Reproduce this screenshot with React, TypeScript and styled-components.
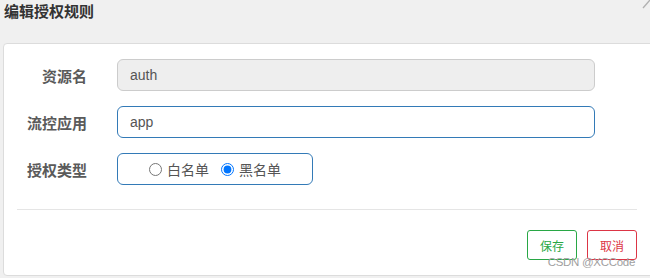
import styled, { createGlobalStyle } from "styled-components";

const GlobalStyle = createGlobalStyle`
  html, body {
    margin: 0;
    padding: 0;
    background: #f0f0f0;
    font-family: "Liberation Sans", "Noto Sans CJK SC", sans-serif;
  }
  * {
    box-sizing: border-box;
  }
`;

const Dialog = styled.div`
  position: relative;
  width: 650px;
  height: 278px;
  overflow: hidden;
  background: #f0f0f0;
`;

const Header = styled.div`
  height: 43px;
  padding: 3px 4px 0;
`;

const Title = styled.h4`
  margin: 0;
  font-size: 15px;
  line-height: 18px;
  font-weight: bold;
  color: #333;
`;

const CloseMark = styled.svg`
  position: absolute;
  top: 0;
  right: 0;
`;

const Panel = styled.div`
  margin-left: 3px;
  width: 652px;
  height: 233px;
  background: #fff;
  border: 1px solid #dcdcdc;
  border-radius: 4px;
  padding: 15px 17px 0 0;
`;

const Form = styled.div`
  display: flex;
  flex-direction: column;
  gap: 15px;
`;

const Row = styled.div`
  display: grid;
  grid-template-columns: 83px auto;
  column-gap: 30px;
  align-items: center;
`;

const Label = styled.label`
  text-align: right;
  font-size: 15px;
  font-weight: bold;
  color: #5a5a5a;
`;

const TextInput = styled.div<{ $disabled?: boolean }>`
  width: 478px;
  height: 32px;
  padding: 0 12px;
  display: flex;
  align-items: center;
  font-size: 14px;
  color: #555;
  border-radius: 6px;
  border: 1px solid ${({ $disabled }) => ($disabled ? "#cccccc" : "#337ab7")};
  background: ${({ $disabled }) => ($disabled ? "#eeeeee" : "#ffffff")};
`;

const RadioBox = styled.div`
  width: 196px;
  height: 32px;
  display: flex;
  align-items: center;
  justify-content: center;
  gap: 12px;
  border: 1px solid #337ab7;
  border-radius: 6px;
  font-size: 14px;
  color: #555;
`;

const RadioItem = styled.label`
  display: flex;
  align-items: center;
  gap: 5px;

  input {
    margin: 0;
    width: 13px;
    height: 13px;
  }
`;

const Divider = styled.hr`
  margin: 24px 0 20px 13px;
  border: 0;
  border-top: 1px solid #e5e5e5;
`;

const Footer = styled.div`
  display: flex;
  justify-content: flex-end;
  gap: 10px;
`;

const Button = styled.button<{ $color: string }>`
  height: 30px;
  padding: 0 12px;
  font-family: inherit;
  font-size: 12px;
  color: ${({ $color }) => $color};
  background: #fff;
  border: 1px solid ${({ $color }) => $color};
  border-radius: 3px;
`;

const Watermark = styled.span`
  position: absolute;
  right: 15px;
  top: 256px;
  font-size: 11.5px;
  color: #a0a0a0;
  letter-spacing: -0.3px;
`;

export default function App() {
  return (
    <>
      <GlobalStyle />
      <Dialog>
        <Header>
          <Title>编辑授权规则</Title>
        </Header>
        <CloseMark width="8" height="9" viewBox="0 0 8 9">
          <line x1="1" y1="8" x2="8" y2="0" stroke="#b0b0b0" strokeWidth="1.4" />
        </CloseMark>
        <Panel>
          <Form>
            <Row>
              <Label>资源名</Label>
              <TextInput $disabled>auth</TextInput>
            </Row>
            <Row>
              <Label>流控应用</Label>
              <TextInput>app</TextInput>
            </Row>
            <Row>
              <Label>授权类型</Label>
              <RadioBox>
                <RadioItem>
                  <input type="radio" name="strategy" readOnly />
                  白名单
                </RadioItem>
                <RadioItem>
                  <input type="radio" name="strategy" defaultChecked />
                  黑名单
                </RadioItem>
              </RadioBox>
            </Row>
          </Form>
          <Divider />
          <Footer>
            <Button $color="#28a745">保存</Button>
            <Button $color="#dc3545">取消</Button>
          </Footer>
        </Panel>
        <Watermark>CSDN @XCCode</Watermark>
      </Dialog>
    </>
  );
}
